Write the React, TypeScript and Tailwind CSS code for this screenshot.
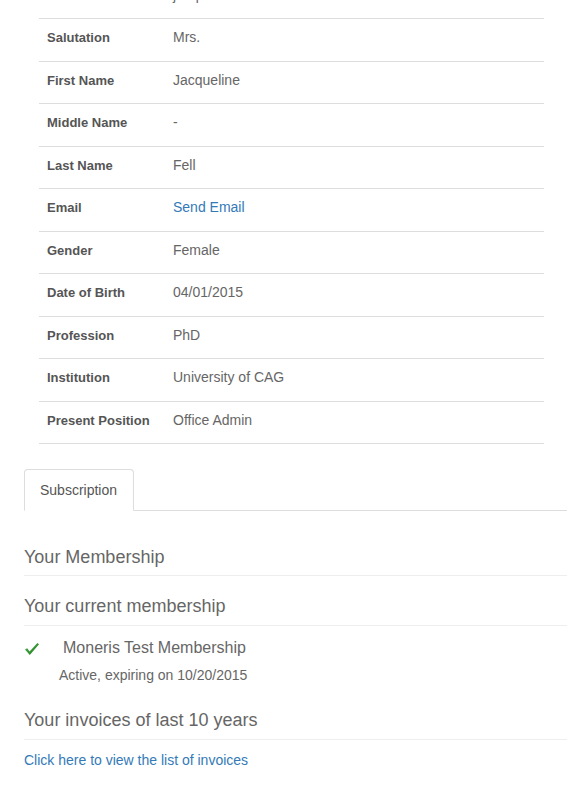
const rows: [string, string, boolean?][] = [
  ['Username', 'jacquelinefell'],
  ['Salutation', 'Mrs.'],
  ['First Name', 'Jacqueline'],
  ['Middle Name', '-'],
  ['Last Name', 'Fell'],
  ['Email', 'Send Email', true],
  ['Gender', 'Female'],
  ['Date of Birth', '04/01/2015'],
  ['Profession', 'PhD'],
  ['Institution', 'University of CAG'],
  ['Present Position', 'Office Admin'],
];

function Check() {
  return (
    <svg width="16" height="16" viewBox="0 0 16 16" className="shrink-0">
      <defs>
        <linearGradient id="g" x1="0" y1="0" x2="1" y2="1">
          <stop offset="0" stopColor="#4cb04c" />
          <stop offset="1" stopColor="#1d7a1d" />
        </linearGradient>
      </defs>
      <path d="M1 9.6 L3.2 8.2 L5.6 11.6 L13.4 3 L15 4.2 L5.8 15 Z" fill="url(#g)" />
    </svg>
  );
}

export default function App() {
  return (
    <div className="w-[567px] h-[786px] overflow-hidden bg-white text-[14px] text-[#666] font-['Liberation_Sans',Arial,sans-serif]">
      <div className="ml-[39px] w-[505px] mt-[-23.5px]">
        {rows.map(([label, value, link]) => (
          <div key={label} className="flex border-b border-[#ddd] pt-2 pb-[13.5px] leading-5">
            <div className="w-[134px] pl-2 pt-px text-[13px] leading-[19px] font-bold text-[#555]">{label}</div>
            <div className={link ? 'text-[#337ab7]' : ''}>{value}</div>
          </div>
        ))}
      </div>

      <div className="pl-6 mt-[25px]">
        <div className="flex border-b border-[#ddd]">
          <div className="w-[110px] h-[42px] -mb-px bg-white border border-[#ddd] border-b-white rounded-t pl-[15px] pt-[10px] leading-5 text-[#555]">
            Subscription
          </div>
        </div>

        <div className="mt-[36px] text-[18px] leading-5 pb-[8px] border-b border-[#eee]">Your Membership</div>
        <div className="mt-5 text-[18px] leading-5 pb-[9px] border-b border-[#eee]">Your current membership</div>

        <div className="flex items-center mt-[12px]">
          <Check />
          <span className="ml-[23px] text-[16px] leading-5">Moneris Test Membership</span>
        </div>
        <div className="ml-[35px] mt-[7px] leading-5">Active, expiring on 10/20/2015</div>

        <div className="mt-[25px] text-[18px] leading-5 pb-[9px] border-b border-[#eee]">Your invoices of last 10 years</div>
        <div className="mt-[10px] leading-5 text-[#337ab7]">Click here to view the list of invoices</div>
      </div>
    </div>
  );
}
